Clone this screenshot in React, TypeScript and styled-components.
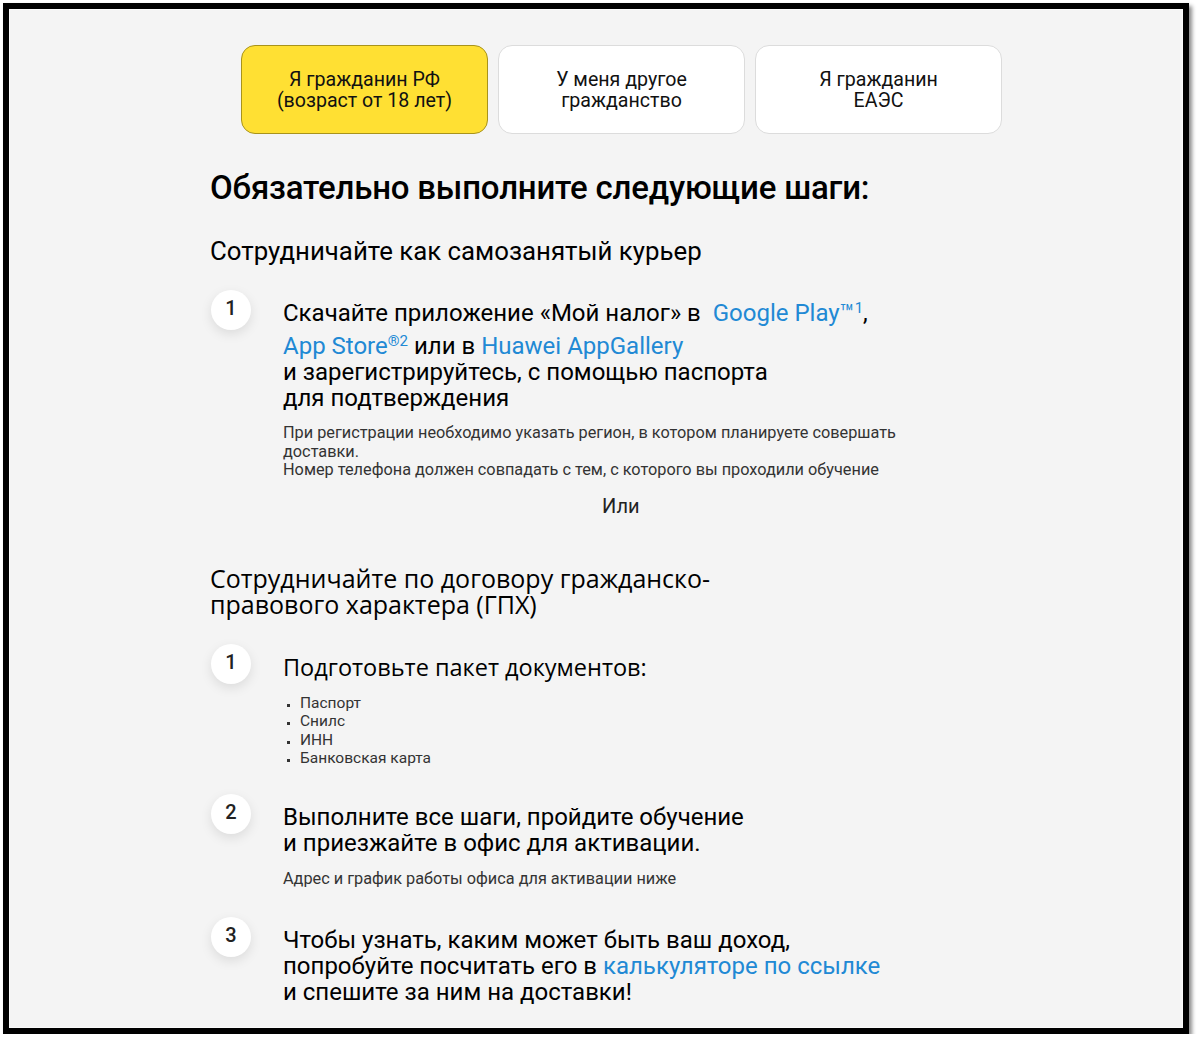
import React from "react";
import styled, { createGlobalStyle } from "styled-components";

const GlobalStyle = createGlobalStyle`
  html, body { margin: 0; padding: 0; background: #ffffff; }
  body { font-family: Roboto, "Liberation Sans", sans-serif; color: #000; }
  * { box-sizing: border-box; }
`;

const Frame = styled.div`
  margin: 3px 0 0 3px;
  width: 1186px;
  height: 1031px;
  border: 6px solid #000;
  box-shadow: 3px 3px 4px rgba(0, 0, 0, 0.45);
`;

const Inner = styled.div`
  height: 100%;
  border: 1px solid #fafafa;
  background: #f4f4f4;
  padding: 35px 0 0 200px;
  overflow: hidden;
`;

const Tabs = styled.div`
  display: flex;
  gap: 10px;
  margin-left: 31px;
`;

const Tab = styled.div<{ $active?: boolean }>`
  width: 247px;
  height: 89px;
  border-radius: 14px;
  display: flex;
  align-items: center;
  justify-content: center;
  text-align: center;
  font-size: 19.6px;
  line-height: 21px;
  font-weight: 400;
  color: #111;
  background: ${(p) => (p.$active ? "#ffe033" : "#ffffff")};
  border: 1.5px solid ${(p) => (p.$active ? "#a8931c" : "#dcdcdc")};
`;

const Title = styled.h1`
  margin: 36px 0 0;
  font-size: 33px;
  line-height: 36px;
  font-weight: 500;
  letter-spacing: -0.2px;
`;

const Subtitle = styled.h2`
  margin: 31px 0 0;
  font-size: 25.8px;
  line-height: 28px;
  font-weight: 400;
`;

const Heading = styled.h2`
  margin: 47px 0 0;
  font-family: "Open Sans", sans-serif;
  font-size: 25px;
  line-height: 26px;
  font-weight: 400;
`;

const Step = styled.div<{ $top: number }>`
  display: grid;
  grid-template-columns: 73px 1fr;
  margin-top: ${(p) => p.$top}px;
`;

const Num = styled.div`
  width: 40px;
  height: 40px;
  margin-left: 1px;
  border-radius: 50%;
  background: #fff;
  box-shadow: 0 4px 12px rgba(0, 0, 0, 0.1);
  display: flex;
  align-items: center;
  justify-content: center;
  font-size: 20px;
  font-weight: 500;
  color: #222;
  padding-bottom: 4px;
  margin-top: -1px;
`;

const StepBody = styled.div`
  padding-top: 9px;
`;

const StepText = styled.div<{ $wide?: boolean }>`
  font-family: ${(p) => (p.$wide ? '"Open Sans", sans-serif' : "Roboto, sans-serif")};
  font-size: ${(p) => (p.$wide ? 23.5 : 24)}px;
  font-weight: 400;
  line-height: 26px;
  color: #000;
  sup {
    font-size: 15px;
    line-height: 0;
    vertical-align: 8px;
  }
`;

const Line = styled.span<{ $gap?: number }>`
  display: block;
  margin-top: ${(p) => p.$gap ?? 0}px;
`;

const Link = styled.a`
  color: #2189d4;
  text-decoration: none;
`;

const Note = styled.div<{ $top?: number }>`
  margin-top: ${(p) => p.$top ?? 13}px;
  font-size: 16.3px;
  line-height: 18.5px;
  color: #333;
  max-width: 640px;
`;

const Or = styled.div`
  margin: 14px 0 0;
  padding-left: 319px;
  font-size: 20px;
  line-height: 24px;
  color: #222;
`;

const Bullets = styled.ul`
  margin: 14px 0 0;
  padding: 0 0 0 17px;
  list-style: square;
  font-size: 15.5px;
  line-height: 18.5px;
  color: #333;
  li::marker { font-size: 11px; }
`;

export default function App() {
  return (
    <>
      <GlobalStyle />
      <Frame>
        <Inner>
          <Tabs>
            <Tab $active>Я гражданин РФ<br />(возраст от 18 лет)</Tab>
            <Tab>У меня другое<br />гражданство</Tab>
            <Tab>Я гражданин<br />ЕАЭС</Tab>
          </Tabs>
          <Title>Обязательно выполните следующие шаги:</Title>
          <Subtitle>Сотрудничайте как самозанятый курьер</Subtitle>
          <Step $top={26}>
            <Num>1</Num>
            <StepBody>
              <StepText>
                <Line>
                  Скачайте приложение «Мой налог» в&nbsp; <Link>Google Play™<sup>1</sup></Link>,
                </Line>
                <Line $gap={7}>
                  <Link>App Store<sup>®2</sup></Link> или в <Link>Huawei AppGallery</Link>
                </Line>
                <Line>и зарегистрируйтесь, с помощью паспорта</Line>
                <Line>для подтверждения</Line>
              </StepText>
              <Note>
                При регистрации необходимо указать регион, в котором планируете совершать доставки.<br />
                Номер телефона должен совпадать с тем, с которого вы проходили обучение
              </Note>
              <Or>Или</Or>
            </StepBody>
          </Step>
          <Heading>Сотрудничайте по договору гражданско-<br />правового характера (ГПХ)</Heading>
          <Step $top={28}>
            <Num>1</Num>
            <StepBody>
              <StepText $wide>Подготовьте пакет документов:</StepText>
              <Bullets>
                <li>Паспорт</li>
                <li>Снилс</li>
                <li>ИНН</li>
                <li>Банковская карта</li>
              </Bullets>
            </StepBody>
          </Step>
          <Step $top={27}>
            <Num>2</Num>
            <StepBody>
              <StepText>
                Выполните все шаги, пройдите обучение<br />
                и приезжайте в офис для активации.
              </StepText>
              <Note $top={14}>Адрес и график работы офиса для активации ниже</Note>
            </StepBody>
          </Step>
          <Step $top={30}>
            <Num>3</Num>
            <StepBody>
              <StepText>
                Чтобы узнать, каким может быть ваш доход,<br />
                попробуйте посчитать его в <Link>калькуляторе по ссылке</Link><br />
                и спешите за ним на доставки!
              </StepText>
            </StepBody>
          </Step>
        </Inner>
      </Frame>
    </>
  );
}
